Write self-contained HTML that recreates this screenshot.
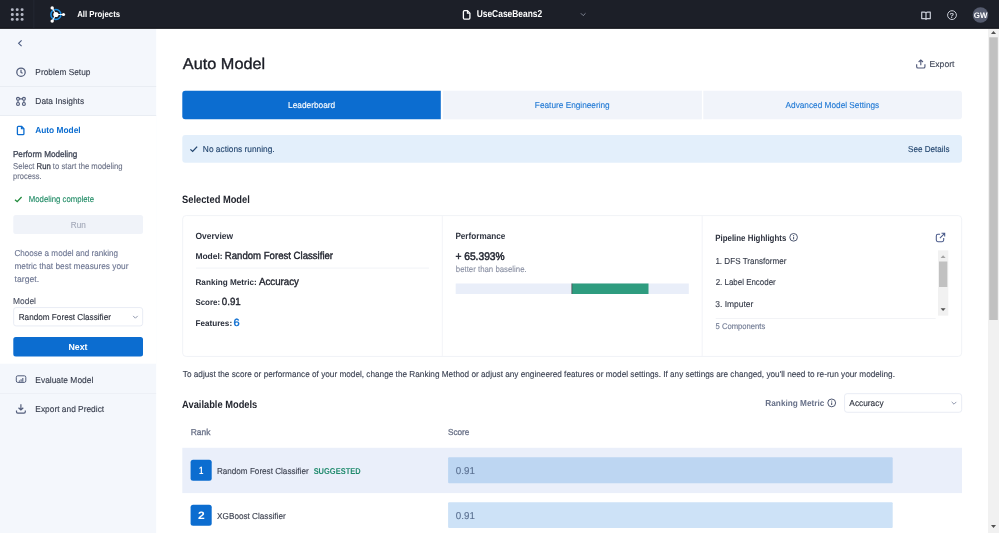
<!DOCTYPE html>
<html lang="en"><head><meta charset="utf-8"><title>Auto Model</title>
<style>
html,body{margin:0;padding:0}
body{width:999px;height:533px;overflow:hidden;background:#fff;font-family:"Liberation Sans",sans-serif;position:relative;text-rendering:geometricPrecision}
#app{position:absolute;left:0;top:0;width:999px;height:533px;overflow:hidden;background:#fff;will-change:transform}
.t{position:absolute;white-space:pre;margin:0;padding:0;font-weight:400;text-decoration:none;display:block;will-change:transform}
.t>span{display:block;transform-origin:0 0}
.g{position:absolute;left:0;top:0;display:block}
header,nav,main,section,article,ul,ol,li,h1,h2,h3,p,a,label,button{margin:0;padding:0;border:0;background:none;list-style:none}
button.t{font-family:inherit;text-align:left;overflow:visible}
</style></head>
<body>
<div id="app">
<nav>
<svg class="g" width="999" height="533" viewBox="0 0 999 533">
<rect x="0" y="28.67" width="156.2" height="504.33" fill="#f4f7fc"/>
<rect x="0" y="115.9" width="156.2" height="247.8" fill="#fff"/>
<rect x="0" y="86.2" width="156.2" height="0.7" fill="#e4e8f0"/>
<rect x="0" y="115.3" width="156.2" height="0.7" fill="#e4e8f0"/>
<rect x="0" y="393.35" width="156.2" height="0.65" fill="#e9ecf3"/>
<g transform="translate(17.6 39.9)" fill="none"><path d="M4 0.5L1 3.4L4 6.3" stroke="#4a5a80" stroke-width="1.1"/></g>
<g transform="translate(16 67.2)" fill="none"><circle cx="5" cy="5" r="4.2" stroke="#525d7b" stroke-width="1.25"/><path d="M5 2.5V5.2L6.6 6.1" stroke="#525d7b" stroke-width="1.2"/></g>
<g transform="translate(16 96)" fill="none"><g stroke="#525d7b" stroke-width="1.15"><circle cx="2" cy="2.8" r="1.45"/><circle cx="7.9" cy="2.8" r="1.45"/><circle cx="2" cy="7.9" r="1.45"/><circle cx="7.9" cy="7.9" r="1.45"/><path d="M2 4.2V6.5M7.9 4.2V6.5M3.4 2.8H6.5"/></g></g>
<g transform="translate(16.6 125.6)" fill="none"><path d="M1.6 0.7H4.9L7.3 3.1V8.1Q7.3 9.1 6.3 9.1H1.8Q0.8 9.1 0.8 8.1V1.7Q0.8 0.7 1.8 0.7Z" stroke="#0c6dd0" stroke-width="1.3" stroke-linejoin="round"/><path d="M4.8 0.9V3.2H7.1" stroke="#0c6dd0" stroke-width="1.1"/></g>
<g transform="translate(14.4 196.3)" fill="none"><path d="M0.6 3.4L2.8 5.4L7.2 0.7" stroke="#218a3c" stroke-width="1.3"/></g>
<rect x="13.3" y="215" width="129.7" height="19" fill="#f0f3f9" rx="2.5"/>
<rect x="13.65" y="307.55" width="129" height="18.4" fill="#fff" rx="2.5" stroke="#e3e7f1" stroke-width="0.8"/>
<g transform="translate(132.6 315.4)" fill="none"><path d="M0.5 0.5L2.8 2.8L5.1 0.5" stroke="#858da5" stroke-width="0.9"/></g>
<rect x="13.3" y="337" width="129.7" height="19.6" fill="#0c6dd0" rx="2.5"/>
<g transform="translate(15.7 375.2)" fill="none"><rect x="0.6" y="0.6" width="9.5" height="6.6" rx="1.5" stroke="#525d7b" stroke-width="1"/><path d="M3.7 5.4V6.6M5.4 4.1V6.6M7.1 2.9V6.6" stroke="#525d7b" stroke-width="1.1"/></g>
<g transform="translate(15.9 403.8)" fill="none"><path d="M5 0.5V6M2.6 3.9L5 6.2L7.4 3.9" stroke="#525d7b" stroke-width="1.2"/><path d="M0.6 6.6V8Q0.6 9.3 1.9 9.3H8.1Q9.4 9.3 9.4 8V6.6" stroke="#525d7b" stroke-width="1.2"/></g>
</svg>
<ul>
<li>
<a class="t" style="left:35px;top:67px;font-size:8.67px;line-height:11px;color:#363c4c;transform:translateY(0.23px);-webkit-text-stroke:0.12px #363c4c;"><span style="transform:translateX(0.366px) scaleX(0.961)">Problem Setup</span></a>
</li>
<li>
<a class="t" style="left:35px;top:96px;font-size:8.67px;line-height:11px;color:#363c4c;transform:translateY(0.13px);-webkit-text-stroke:0.12px #363c4c;"><span style="transform:translateX(0.35px) scaleX(0.965)">Data Insights</span></a>
</li>
<li>
<a class="t" style="left:35px;top:125px;font-size:8.67px;line-height:11px;color:#0c6dd0;transform:translateY(0.23px);font-weight:700;"><span style="transform:translateX(0.187px) scaleX(0.965)">Auto Model</span></a>
<section>
<h3 class="t" style="left:12px;top:149px;font-size:8.67px;line-height:11px;color:#434959;-webkit-text-stroke:0.32px #434959;"><span style="transform:translateX(0.916px) scaleX(0.941)">Perform Modeling</span></h3>
<p class="t" style="left:13px;top:161px;font-size:8.5px;line-height:11px;color:#6b7186;-webkit-text-stroke:0.12px #6b7186;"><span style="transform:translateX(0.063px) scaleX(0.905)">Select <b style="color:#3a3f4d;font-weight:400;-webkit-text-stroke:0.28px #3a3f4d">Run</b> to start the modeling</span></p>
<p class="t" style="left:13px;top:170px;font-size:8.5px;line-height:11px;color:#6b7186;transform:translateY(0.83px);-webkit-text-stroke:0.12px #6b7186;"><span style="transform:translateX(0.082px) scaleX(0.884)">process.</span></p>
<span class="t" style="left:28px;top:194px;font-size:8.67px;line-height:11px;color:#1f8a64;transform:translateY(0.13px);-webkit-text-stroke:0.12px #1f8a64;"><span style="transform:translateX(0.829px) scaleX(0.897)">Modeling complete</span></span>
<button class="t" style="left:70px;top:220px;font-size:8.67px;line-height:11px;color:#a3a9b9;transform:translateY(0.33px);-webkit-text-stroke:0.12px #a3a9b9;"><span style="transform:translateX(0.868px) scaleX(0.944)">Run</span></button>
<p class="t" style="left:14px;top:248px;font-size:8.67px;line-height:11px;color:#6d7692;transform:translateY(0.13px);-webkit-text-stroke:0.12px #6d7692;"><span style="transform:translateX(0.396px) scaleX(0.937)">Choose a model and ranking</span></p>
<p class="t" style="left:14px;top:260px;font-size:8.67px;line-height:11px;color:#6d7692;transform:translateY(0.83px);-webkit-text-stroke:0.12px #6d7692;"><span style="transform:translateX(0.379px) scaleX(0.96)">metric that best measures your</span></p>
<p class="t" style="left:14px;top:273px;font-size:8.67px;line-height:11px;color:#6d7692;transform:translateY(0.53px);-webkit-text-stroke:0.12px #6d7692;"><span style="transform:translateX(0.595px) scaleX(0.997)">target.</span></p>
<label class="t" style="left:13px;top:296px;font-size:8.67px;line-height:11px;color:#4b5162;transform:translateY(0.43px);-webkit-text-stroke:0.12px #4b5162;"><span style="transform:translateX(0.029px) scaleX(0.971)">Model</span></label>
<span class="t" style="left:18px;top:311px;font-size:8.67px;line-height:11px;color:#2b303c;transform:translateY(0.93px);-webkit-text-stroke:0.12px #2b303c;"><span style="transform:translateX(0.672px) scaleX(0.945)">Random Forest Classifier</span></span>
<button class="t" style="left:68px;top:342px;font-size:8.67px;line-height:11px;color:#fff;font-weight:700;"><span style="transform:translateX(0.402px) scaleX(1.015)">Next</span></button>
</section>
</li>
<li>
<a class="t" style="left:35px;top:374px;font-size:8.67px;line-height:11px;color:#363c4c;transform:translateY(0.63px);-webkit-text-stroke:0.12px #363c4c;"><span style="transform:translateX(0.329px) scaleX(0.971)">Evaluate Model</span></a>
</li>
<li>
<a class="t" style="left:35px;top:403px;font-size:8.67px;line-height:11px;color:#363c4c;transform:translateY(0.93px);-webkit-text-stroke:0.12px #363c4c;"><span style="transform:translateX(0.347px) scaleX(0.966)">Export and Predict</span></a>
</li>
</ul>
</nav>
<main>
<svg class="g" width="999" height="533" viewBox="0 0 999 533">
<g transform="translate(916.1 59.2) scale(0.94)" fill="none"><path d="M5 6.4V0.9M2.7 3L5 0.8L7.3 3" stroke="#50597a" stroke-width="1.2"/><path d="M0.6 5.5V8Q0.6 9.4 2 9.4H8Q9.4 9.4 9.4 8V5.5" stroke="#50597a" stroke-width="1.2"/></g>
<path d="M185.3 90.7H440.8V119.35H185.3Q182.3 119.35 182.3 116.35V93.7Q182.3 90.7 185.3 90.7Z" fill="#0c6dd0"/>
<rect x="442.9" y="90.7" width="259" height="28.65" fill="#f1f4fa"/>
<path d="M703.3 90.7H959Q962 90.7 962 93.7V116.35Q962 119.35 959 119.35H703.3Z" fill="#f1f4fa"/>
<rect x="182.3" y="135" width="779.7" height="27.7" fill="#e3effb" rx="3"/>
<g transform="translate(189.8 145.9) scale(1.02)" fill="none"><path d="M0.6 3.4L2.8 5.4L7.2 0.7" stroke="#23466f" stroke-width="1.3"/></g>
<rect x="182.65" y="215.55" width="779" height="140.9" fill="#fff" rx="3.5" stroke="#eef0f5" stroke-width="0.8"/>
<rect x="441.85" y="216" width="0.75" height="140" fill="#eef0f5"/>
<rect x="701.75" y="216" width="0.75" height="140" fill="#eef0f5"/>
<rect x="195.9" y="267.7" width="233.1" height="0.7" fill="#eceef3"/>
<rect x="455.7" y="283.5" width="233.1" height="10.5" fill="#e9eef9"/>
<rect x="571.8" y="283.5" width="76.7" height="10.5" fill="#2e9c7f"/>
<rect x="571.6" y="283.5" width="0.6" height="10.5" fill="#4b2f3d"/>
<g transform="translate(789.2 232.9) scale(0.98)" fill="none"><circle cx="4.5" cy="4.5" r="3.9" stroke="#434d68" stroke-width="0.95"/><path d="M4.5 4V6.6" stroke="#434d68" stroke-width="1"/><circle cx="4.5" cy="2.7" r="0.6" fill="#434d68"/></g>
<g transform="translate(935.7 232.7)" fill="none"><path d="M4.4 1.6H2.2Q0.6 1.6 0.6 3.2V7.4Q0.6 9 2.2 9H6.4Q8 9 8 7.4V5.2" stroke="#4a5a8a" stroke-width="1.05"/><path d="M4.2 5.4L9 0.6M5.8 0.6H9V3.8" stroke="#4a5a8a" stroke-width="1.05"/></g>
<rect x="938" y="250.4" width="10.3" height="65.2" fill="#f1f1f1"/>
<rect x="939" y="261.5" width="8.3" height="25.5" fill="#c1c1c1"/>
<path d="M940.6 258L943.1 255.3L945.6 258Z" fill="#a3a3a3"/>
<path d="M940.6 308.3L943.1 311L945.6 308.3Z" fill="#505050"/>
<rect x="715.7" y="318.25" width="220" height="0.7" fill="#eceef3"/>
<g transform="translate(827.2 398.4)" fill="none"><circle cx="4.5" cy="4.5" r="3.9" stroke="#434d68" stroke-width="0.95"/><path d="M4.5 4V6.6" stroke="#434d68" stroke-width="1"/><circle cx="4.5" cy="2.7" r="0.6" fill="#434d68"/></g>
<rect x="844.55" y="393.65" width="117.1" height="18.6" fill="#fff" rx="2.5" stroke="#e3e7f1" stroke-width="0.8"/>
<g transform="translate(951.2 401.4)" fill="none"><path d="M0.5 0.5L2.8 2.8L5.1 0.5" stroke="#858da5" stroke-width="0.9"/></g>
<rect x="182.3" y="447.8" width="779.7" height="45.3" fill="#eaeffa"/>
<rect x="190.6" y="459.8" width="21.1" height="21" fill="#0c6dd0" rx="2.5"/>
<rect x="448.1" y="457.3" width="444.6" height="25.9" fill="#bdd6f2" rx="1"/>
<rect x="190.6" y="504.75" width="21.1" height="20.95" fill="#0c6dd0" rx="2.5"/>
<rect x="448.1" y="502.2" width="444.6" height="25.9" fill="#cde2f7" rx="1"/>
<rect x="988" y="28.67" width="11" height="504.33" fill="#f1f1f1"/>
<rect x="989.2" y="37.3" width="8.6" height="282.7" fill="#c1c1c1"/>
<path d="M991 33.9L993.5 31L996 33.9Z" fill="#505050"/>
<path d="M991 525L993.5 527.9L996 525Z" fill="#505050"/>
</svg>
<h1 class="t" style="left:182px;top:55px;font-size:15.6px;line-height:20px;color:#1b1d26;transform:translateY(0.33px);-webkit-text-stroke:0.35px #1b1d26;"><span style="transform:translateX(0.767px) scaleX(1.045)">Auto Model</span></h1>
<a class="t" style="left:929px;top:59px;font-size:8.67px;line-height:11px;color:#3f4657;transform:translateY(0.23px);-webkit-text-stroke:0.12px #3f4657;"><span style="transform:translateX(0.568px) scaleX(0.995)">Export</span></a>
<section>
<a class="t" style="left:288px;top:100px;font-size:8.67px;line-height:11px;color:#fff;transform:translateY(0.33px);-webkit-text-stroke:0.12px #fff;"><span style="transform:translateX(0.098px) scaleX(0.959)">Leaderboard</span></a>
<a class="t" style="left:534px;top:100px;font-size:8.67px;line-height:11px;color:#1f78d4;transform:translateY(0.23px);-webkit-text-stroke:0.12px #1f78d4;"><span style="transform:translateX(0.872px) scaleX(0.954)">Feature Engineering</span></a>
<a class="t" style="left:785px;top:100px;font-size:8.67px;line-height:11px;color:#1f78d4;transform:translateY(0.13px);-webkit-text-stroke:0.12px #1f78d4;"><span style="transform:translateX(0.545px) scaleX(0.954)">Advanced Model Settings</span></a>
</section>
<section>
<p class="t" style="left:202px;top:144px;font-size:8.67px;line-height:11px;color:#23466f;-webkit-text-stroke:0.12px #23466f;"><span style="transform:translateX(0.862px) scaleX(0.963)">No actions running.</span></p>
<a class="t" style="left:908px;top:144px;font-size:8.67px;line-height:11px;color:#23466f;-webkit-text-stroke:0.12px #23466f;"><span style="transform:translateX(0.078px) scaleX(0.934)">See Details</span></a>
</section>
<section>
<h2 class="t" style="left:182px;top:193px;font-size:10.67px;line-height:14px;color:#23262f;transform:translateY(0.33px);font-weight:700;"><span style="transform:translateX(0.024px) scaleX(0.874)">Selected Model</span></h2>
<article>
<h3 class="t" style="left:195px;top:230px;font-size:9px;line-height:12px;color:#2c313d;transform:translateY(0.23px);font-weight:700;"><span style="transform:translateX(0.543px) scaleX(0.938)">Overview</span></h3>
<span class="t" style="left:195px;top:250px;font-size:8.33px;line-height:11px;color:#2c313d;transform:translateY(0.73px);font-weight:700;"><span style="transform:translateX(0.402px) scaleX(1.014)">Model:</span></span>
<span class="t" style="left:224px;top:249px;font-size:10.3px;line-height:13px;color:#1f222c;transform:translateY(0.73px);-webkit-text-stroke:0.38px #1f222c;"><span style="transform:translateX(0.796px) scaleX(0.932)">Random Forest Classifier</span></span>
<span class="t" style="left:195px;top:276px;font-size:8.33px;line-height:11px;color:#2c313d;transform:translateY(0.73px);font-weight:700;"><span style="transform:translateX(0.465px) scaleX(0.982)">Ranking Metric:</span></span>
<span class="t" style="left:258px;top:275px;font-size:10.3px;line-height:13px;color:#1f222c;transform:translateY(0.73px);-webkit-text-stroke:0.38px #1f222c;"><span style="transform:translateX(0.906px) scaleX(0.945)">Accuracy</span></span>
<span class="t" style="left:195px;top:296px;font-size:8.33px;line-height:11px;color:#2c313d;transform:translateY(0.73px);font-weight:700;"><span style="transform:translateX(0.422px) scaleX(0.952)">Score:</span></span>
<span class="t" style="left:221px;top:295px;font-size:10.3px;line-height:13px;color:#1f222c;transform:translateY(0.73px);-webkit-text-stroke:0.38px #1f222c;"><span style="transform:translateX(0.833px) scaleX(0.945)">0.91</span></span>
<span class="t" style="left:195px;top:317px;font-size:8.33px;line-height:11px;color:#2c313d;transform:translateY(0.63px);font-weight:700;"><span style="transform:translateX(0.472px) scaleX(0.977)">Features:</span></span>
<span class="t" style="left:233px;top:316px;font-size:10.3px;line-height:13px;color:#0c6dd0;transform:translateY(0.63px);-webkit-text-stroke:0.38px #0c6dd0;"><span style="transform:translateX(0.49px) scaleX(1.068)">6</span></span>
</article>
<article>
<h3 class="t" style="left:455px;top:230px;font-size:9px;line-height:12px;color:#2c313d;transform:translateY(0.23px);font-weight:700;"><span style="transform:translateX(0.391px) scaleX(0.906)">Performance</span></h3>
<span class="t" style="left:455px;top:249px;font-size:11.1px;line-height:14px;color:#262a35;transform:translateY(0.53px);-webkit-text-stroke:0.5px #262a35;"><span style="transform:translateX(0.422px) scaleX(0.922)">+ 65.393%</span></span>
<span class="t" style="left:455px;top:264px;font-size:8.5px;line-height:11px;color:#8a90a3;transform:translateY(0.13px);-webkit-text-stroke:0.12px #8a90a3;"><span style="transform:translateX(0.774px) scaleX(0.921)">better than baseline.</span></span>
</article>
<article>
<h3 class="t" style="left:715px;top:231px;font-size:9px;line-height:12px;color:#2c313d;transform:translateY(0.83px);font-weight:700;"><span style="transform:translateX(0.243px) scaleX(0.877)">Pipeline Highlights</span></h3>
<ol>
<li class="t" style="left:715px;top:255px;font-size:8.67px;line-height:11px;color:#343a48;transform:translateY(0.93px);-webkit-text-stroke:0.12px #343a48;"><span style="transform:translateX(0.377px) scaleX(0.934)">1. DFS Transformer</span></li>
<li class="t" style="left:715px;top:277px;font-size:8.67px;line-height:11px;color:#343a48;-webkit-text-stroke:0.12px #343a48;"><span style="transform:translateX(0.654px) scaleX(0.918)">2. Label Encoder</span></li>
<li class="t" style="left:715px;top:298px;font-size:8.67px;line-height:11px;color:#343a48;transform:translateY(0.83px);-webkit-text-stroke:0.12px #343a48;"><span style="transform:translateX(0.256px) scaleX(0.977)">3. Imputer</span></li>
</ol>
<span class="t" style="left:715px;top:321px;font-size:8.3px;line-height:11px;color:#6e7891;-webkit-text-stroke:0.12px #6e7891;"><span style="transform:translateX(0.499px) scaleX(0.923)">5 Components</span></span>
</article>
</section>
<p class="t" style="left:182px;top:368px;font-size:8.67px;line-height:11px;color:#3a4152;transform:translateY(0.83px);-webkit-text-stroke:0.12px #3a4152;"><span style="transform:translateX(0.82px) scaleX(0.949)">To adjust the score or performance of your model, change the Ranking Method or adjust any engineered features or model settings. If any settings are changed, you'll need to re-run your modeling.</span></p>
<section>
<h2 class="t" style="left:182px;top:397px;font-size:10.67px;line-height:14px;color:#23262f;transform:translateY(0.93px);font-weight:700;"><span style="transform:translateX(0.07px) scaleX(0.874)">Available Models</span></h2>
<label class="t" style="left:765px;top:398px;font-size:8.67px;line-height:11px;color:#687189;transform:translateY(0.13px);font-weight:700;"><span style="transform:translateX(0.317px) scaleX(0.952)">Ranking Metric</span></label>
<span class="t" style="left:849px;top:398px;font-size:8.67px;line-height:11px;color:#2b303c;transform:translateY(0.13px);-webkit-text-stroke:0.12px #2b303c;"><span style="transform:translateX(0.341px) scaleX(0.961)">Accuracy</span></span>
<span class="t" style="left:190px;top:427px;font-size:8.67px;line-height:11px;color:#6b7389;transform:translateY(0.13px);-webkit-text-stroke:0.3px #6b7389;"><span style="transform:translateX(0.764px) scaleX(0.972)">Rank</span></span>
<span class="t" style="left:447px;top:427px;font-size:8.67px;line-height:11px;color:#6b7389;transform:translateY(0.13px);-webkit-text-stroke:0.3px #6b7389;"><span style="transform:translateX(0.955px) scaleX(0.948)">Score</span></span>
<span class="t" style="left:199px;top:464px;font-size:10.67px;line-height:14px;color:#fff;transform:translateY(0.08px);font-weight:700;"><span style="transform:translateX(0.079px) scaleX(0.733)">1</span></span>
<span class="t" style="left:216px;top:465px;font-size:8.67px;line-height:11px;color:#3a3f4d;transform:translateY(0.68px);-webkit-text-stroke:0.12px #3a3f4d;"><span style="transform:translateX(0.911px) scaleX(0.939)">Random Forest Classifier</span></span>
<span class="t" style="left:313px;top:465px;font-size:8.5px;line-height:11px;color:#1f8a6c;transform:translateY(0.58px);font-weight:700;"><span style="transform:translateX(0.633px) scaleX(0.88)">SUGGESTED</span></span>
<span class="t" style="left:455px;top:464px;font-size:10px;line-height:13px;color:#5b7192;transform:translateY(0.83px);-webkit-text-stroke:0.12px #5b7192;"><span style="transform:translateX(0.854px) scaleX(0.975)">0.91</span></span>
<span class="t" style="left:198px;top:509px;font-size:10.67px;line-height:14px;color:#fff;transform:translateY(0.23px);font-weight:700;"><span style="transform:translateX(0.02px) scaleX(1.131)">2</span></span>
<span class="t" style="left:217px;top:510px;font-size:8.67px;line-height:11px;color:#3a3f4d;transform:translateY(0.63px);-webkit-text-stroke:0.12px #3a3f4d;"><span style="transform:translateX(0.123px) scaleX(0.944)">XGBoost Classifier</span></span>
<span class="t" style="left:455px;top:509px;font-size:10px;line-height:13px;color:#5b7192;transform:translateY(0.83px);-webkit-text-stroke:0.12px #5b7192;"><span style="transform:translateX(0.854px) scaleX(0.975)">0.91</span></span>
</section>
</main>
<header>
<svg class="g" width="999" height="533" viewBox="0 0 999 533">
<rect x="0" y="0" width="999" height="28.67" fill="#1c1f28"/>
<rect x="0" y="27.5" width="999" height="1.17" fill="#14161c"/>
<rect x="10.85" y="8.15" width="2.9" height="2.9" fill="#b4b8c5" rx="1.3"/>
<rect x="15.75" y="8.15" width="2.9" height="2.9" fill="#b4b8c5" rx="1.3"/>
<rect x="20.65" y="8.15" width="2.9" height="2.9" fill="#b4b8c5" rx="1.3"/>
<rect x="10.85" y="13.05" width="2.9" height="2.9" fill="#b4b8c5" rx="1.3"/>
<rect x="15.75" y="13.05" width="2.9" height="2.9" fill="#b4b8c5" rx="1.3"/>
<rect x="20.65" y="13.05" width="2.9" height="2.9" fill="#b4b8c5" rx="1.3"/>
<rect x="10.85" y="17.95" width="2.9" height="2.9" fill="#b4b8c5" rx="1.3"/>
<rect x="15.75" y="17.95" width="2.9" height="2.9" fill="#b4b8c5" rx="1.3"/>
<rect x="20.65" y="17.95" width="2.9" height="2.9" fill="#b4b8c5" rx="1.3"/>
<rect x="33.6" y="0" width="0.6" height="28.67" fill="#2a2e38"/>
<g transform="translate(50 6.2)" fill="none"><circle cx="5.9" cy="8.3" r="5" stroke="#1c8fe3" stroke-width="1.5"/>
<path d="M5.9 8.3L2.2 1.7M5.9 8.3L13.5 8.3M5.9 8.3L2.2 14.9" stroke="#f1f2f5" stroke-width="1.15"/>
<circle cx="5.9" cy="8.3" r="2.6" fill="#fff"/><circle cx="2.2" cy="1.7" r="1.7" fill="#fff"/><circle cx="13.5" cy="8.3" r="1.6" fill="#fff"/><circle cx="2.2" cy="14.9" r="1.7" fill="#fff"/></g>
<g transform="translate(462.6 10)" fill="none"><path d="M1.6 0.7H4.9L7.3 3.1V8.1Q7.3 9.1 6.3 9.1H1.8Q0.8 9.1 0.8 8.1V1.7Q0.8 0.7 1.8 0.7Z" stroke="#fff" stroke-width="1.3" stroke-linejoin="round"/><path d="M4.8 0.9V3.2H7.1" stroke="#fff" stroke-width="1.1"/></g>
<g transform="translate(580.4 12.8)" fill="none"><path d="M0.5 0.5L2.8 2.8L5.1 0.5" stroke="#8d93a3" stroke-width="0.9"/></g>
<g transform="translate(921.1 11.5)" fill="none"><path d="M0.6 0.7H3.4Q4.9 0.7 4.9 2V8Q4.9 7.1 3.4 7.1H0.6ZM9.2 0.7H6.4Q4.9 0.7 4.9 2V8Q4.9 7.1 6.4 7.1H9.2Z" stroke="#c9cdd7" stroke-width="1.2" stroke-linejoin="round"/></g>
<g transform="translate(947 10.1)" fill="none"><circle cx="5" cy="5" r="4.4" stroke="#c9cdd7" stroke-width="1"/></g>
<circle cx="980.5" cy="15" r="7.8" fill="#555b6e"/>
</svg>
<a class="t" style="left:77px;top:9px;font-size:8.67px;line-height:11px;color:#fff;transform:translateY(0.43px);font-weight:700;"><span style="transform:translateX(0.151px) scaleX(0.902)">All Projects</span></a>
<h2 class="t" style="left:476px;top:8px;font-size:10px;line-height:13px;color:#fff;transform:translateY(0.23px);font-weight:700;"><span style="transform:translateX(0.674px) scaleX(0.842)">UseCaseBeans2</span></h2>
<span class="t" style="left:949px;top:10px;font-size:7.3px;line-height:9px;color:#c9cdd7;transform:translateY(0.72px);font-weight:700;"><span style="transform:translateX(0.62px) scaleX(1.029)">?</span></span>
<span class="t" style="left:973px;top:10px;font-size:8px;line-height:10px;color:#fff;transform:translateY(0.93px);font-weight:700;"><span style="transform:translateX(0.832px) scaleX(0.99)">GW</span></span>
</header>
</div>
</body></html>
